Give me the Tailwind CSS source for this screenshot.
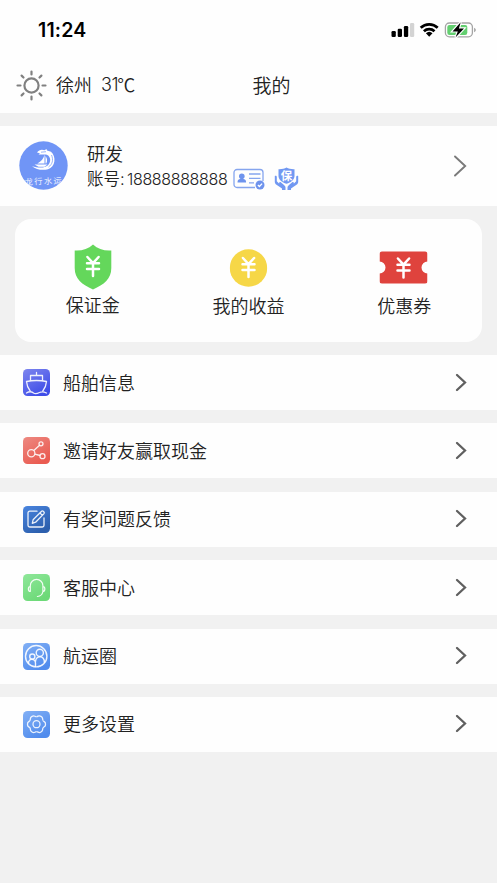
<!DOCTYPE html>
<html lang="zh-CN">
<head>
<meta charset="utf-8">
<title>我的</title>
<script src="https://cdn.jsdelivr.net/npm/@tailwindcss/browser@4"></script>
</head>
<body class="w-[497px] h-[883px] overflow-hidden bg-[#f1f1f1] font-['Inter','Noto_Sans_CJK_SC',sans-serif] font-[350] text-[#222]">
<svg class="absolute w-0 h-0">
  <defs>
    <g id="yen" fill="none" stroke="#fff" stroke-width="2.500" stroke-linecap="round"><path d="M-5.600-9.500 0-3.300 5.600-9.500M-6-3.200H6M-6 2.400H6M0-3V9.600"/></g>
    <path id="lobe" d="M0-7.500C1.800-7.500 2.200-9.400 4.500-7.800 7-6.600 5.600-5.300 6.500-3.750"/>
    <linearGradient id="ship" x1="0" y1="0" x2=".6" y2="1"><stop stop-color="#7e86ee"/><stop offset="1" stop-color="#3f4de8"/></linearGradient>
    <linearGradient id="share" x1="0" y1="0" x2=".6" y2="1"><stop stop-color="#ed8a82"/><stop offset="1" stop-color="#ea5b51"/></linearGradient>
    <linearGradient id="edit" x1="0" y1="0" x2=".6" y2="1"><stop stop-color="#4a85df"/><stop offset="1" stop-color="#2c5fad"/></linearGradient>
    <linearGradient id="service" x1="0" y1="0" x2=".6" y2="1"><stop stop-color="#8fe79a"/><stop offset="1" stop-color="#6cd977"/></linearGradient>
    <linearGradient id="blue" x1="0" y1="0" x2=".6" y2="1"><stop stop-color="#82b0f5"/><stop offset="1" stop-color="#518ced"/></linearGradient>
  </defs>
</svg>

<header class="h-[113px] bg-[#fefefe]">
  <div class="h-[60px] flex items-center justify-between pl-[38px] pr-[20px]">
    <span class="text-[19.500px] leading-[24px] font-semibold text-black tracking-[0.150px]">11:24</span>
    <svg width="86" height="20" viewBox="391 20 86 20">
      <rect x="391.500" y="31" width="4.300" height="6" rx="1.200"/><rect x="397.700" y="28.700" width="4.300" height="8.300" rx="1.200"/><rect x="403.900" y="26" width="4.300" height="11" rx="1.200"/><rect x="410" y="23" width="4.200" height="14" rx="1.200" fill="#d3d3d3"/>
      <g fill="none" stroke="#000" stroke-width="2.700"><path d="M420.700 27.800a12.300 12.300 0 0 1 17 0M423.900 31.200a7.700 7.700 0 0 1 10.600 0"/></g><path d="m425.900 33.300 3.300 3.400 3.300-3.400a4.800 4.800 0 0 0-6.600 0z"/>
      <rect x="445.400" y="23" width="27" height="13.800" rx="4" fill="#fff" stroke="#a4a4a4" stroke-width="1.300"/><rect x="447.300" y="24.900" width="20" height="10" rx="2.200" fill="#63cf70"/><path d="M474.200 27.700v4.500c2-.8 2-3.700 0-4.500z" fill="#999"/>
      <path d="m460.700 22.200-8.200 9.200h5.300l-2.300 6.200 8.500-9.100h-5.100z" stroke="#fff" stroke-width="2.300" paint-order="stroke"/>
    </svg>
  </div>
  <div class="h-[50px] grid grid-cols-[180px_1fr_180px] items-center">
    <div class="flex items-center pl-[16px]">
      <svg width="31" height="31" viewBox="-15.500 -15.500 31 31" fill="none" stroke="#808080" stroke-width="2.200" stroke-linecap="round"><circle r="7.100"/><path d="M0 11v3M-14 0h3M11 0h3M0-14v3M-9.900-9.900l1.900 1.900M9.900-9.900l-1.900 1.900M-9.900 9.900l1.900-1.900M9.900 9.900l-1.900-1.900"/></svg>
      <span class="ml-[9px] pt-[1px] text-[18px] leading-[26px] whitespace-nowrap">徐州</span>
      <span class="ml-[9px] text-[18px] leading-[26px] whitespace-nowrap tracking-[-0.400px]">31</span><span class="-ml-[1px] -mt-[2px] text-[18px] leading-[26px] font-['Noto_Sans_CJK_SC',sans-serif]">℃</span>
    </div>
    <h1 class="text-center pt-[3px] text-[19px] leading-[26px] whitespace-nowrap translate-x-[23px]">我的</h1>
  </div>
</header>

<section class="mt-[13px] h-[79.500px] bg-[#fefefe] flex items-center pl-[19px] pr-[30px]">
  <svg width="49" height="49" viewBox="0 0 49 49">
    <clipPath id="avatar"><circle cx="24.500" cy="24.500" r="24.200"/></clipPath>
    <circle cx="24.500" cy="24.500" r="24.200" fill="#7095f6"/>
    <path d="M18 11.500c2-3 5-3.200 7.500-2.300l2-1.200.5 1.400 4 1.300c5.500 5 4.500 15-3 17.500-5.500 1.500-12 .3-16-3 7 2 14 2 17-2.300 2.500-4 1-8.500-3-9.500l-7.500.2 1.500-1.300z" fill="#fff"/>
    <path d="M25.500 13.500c-.7 4-3.200 7-7.200 9h7.200zM26.500 15c2 2.500 2 5 .8 7.500h-.8zM15.500 23.500h13l-3 2.300h-6z" fill="#fff"/>
    <path d="M32.500 14c2.200 5 .8 9.500-3 12M22 11.200l5-.5" fill="none" stroke="#7095f6" stroke-width=".7"/>
    <g clip-path="url(#avatar)" font-family="Noto Sans CJK SC, sans-serif" font-weight="400" fill="#eef2ff"><text x="24.800" y="43.300" text-anchor="middle" font-size="8.300" letter-spacing="1.300" transform="rotate(-2 24 40)">龙行水运</text></g>
  </svg>
  <div class="ml-[19px] pt-[2px] flex flex-col">
    <span class="text-[18px] leading-[25px]">研发</span>
    <div class="flex items-center h-[25px]">
      <span class="text-[16.500px] leading-[25px] whitespace-nowrap w-[40px]">账号:</span>
      <span class="text-[16px] leading-[25px] font-light whitespace-nowrap tracking-[-0.340px] w-[106px]">18888888888</span>
      <svg width="32" height="22" viewBox="0 0 32 22" fill="none" stroke="#85a5ee" stroke-width="1.300">
        <path d="M22 19.500H4a3 3 0 0 1-3-3V4.500a3 3 0 0 1 3-3h23a3 3 0 0 1 3 3V13" /><path d="M16 6h11.500M16 10.300h11.500M16 14.800h5"/>
        <g fill="#6e93ed" stroke="none"><circle cx="8.800" cy="8.300" r="2.800"/><path d="M4.500 14.500c0-3 1.800-3.700 4.300-3.700s4.300.7 4.300 3.700z"/><circle cx="27" cy="17" r="4.500"/></g><path d="m24.900 17 1.500 1.500 2.700-2.900" stroke="#fff"/>
      </svg>
      <svg class="ml-[9px]" width="25" height="24" viewBox="0 0 25 24">
        <path d="M12.500.5C14.500 1.700 17 2.300 20.500 2.200V9c0 3.800-3.500 6.200-8 7.800C8 15.200 4.500 12.800 4.500 9V2.200C8 2.300 10.500 1.700 12.500.5z" fill="#7198f2"/>
        <path d="M.8 9c1-.6 1.900-.2 2 .8v4.500l2.500 2.400c-.6-1 .3-2.300 1.500-1.500l3.200 2.700c1 .9 1.500 1.700 1.500 2.800V23H8v-1.500l-5.500-3.700C1.400 17 .9 16.200.8 15zM24.200 9c-1-.6-1.900-.2-2 .8v4.500l-2.500 2.400c.6-1-.3-2.300-1.500-1.500L15 17.900c-1 .9-1.500 1.700-1.500 2.800V23H17v-1.500l5.500-3.700c1.100-.8 1.600-1.600 1.700-2.800z" fill="#7198f2"/>
        <text x="12.500" y="13" text-anchor="middle" font-family="Noto Sans CJK SC, sans-serif" font-size="11.500" font-weight="700" fill="#fff">保</text>
      </svg>
    </div>
  </div>
  <svg class="ml-auto" width="14" height="24" viewBox="0 0 14 24" fill="none" stroke="#7a7a7a" stroke-width="1.900" stroke-linecap="round"><path d="m2 2.500 10.200 9.500L2 21.500"/></svg>
</section>

<section class="mt-[13.500px] mx-[15px] h-[123px] rounded-[16px] bg-[#fefefe] grid grid-cols-3 text-[18px] leading-[26px] text-center">
  <div class="flex flex-col items-center pt-[25px]">
    <svg width="38" height="46" viewBox="0 0 38 46"><path d="M19 .5C14 5 8 7 .7 6.500V24c0 11 7.300 16.500 18.300 21.500C30 40.500 37.300 35 37.300 24V6.500C30 7 24 5 19 .5z" fill="#64d75b"/><use href="#yen" x="19" y="22.500"/></svg>
    <span class="mt-[3px]">保证金</span>
  </div>
  <div class="flex flex-col items-center pt-[30px]">
    <svg class="translate-x-[0.500px]" width="38" height="38" viewBox="0 0 38 38"><circle cx="19" cy="19" r="18.700" fill="#f6d747"/><use href="#yen" x="19" y="18.500"/></svg>
    <span class="mt-[7px]">我的收益</span>
  </div>
  <div class="flex flex-col items-center pt-[32px]">
    <svg class="-translate-x-[0.500px]" width="48" height="33" viewBox="0 0 48 33"><path d="M2.500.5h43A2.500 2.500 0 0 1 48 3v7.500a6 6 0 0 0 0 12V30a2.500 2.500 0 0 1-2.500 2.500h-43A2.500 2.500 0 0 1 0 30v-7.500a6 6 0 0 0 0-12V3A2.500 2.500 0 0 1 2.500.5z" fill="#df433d"/><use href="#yen" x="24" y="17"/></svg>
    <span class="mt-[10px]">优惠券</span>
  </div>
</section>

<nav class="mt-[13px] flex flex-col gap-[13.400px] text-[18px] leading-[26px]">
  <a class="h-[55px] bg-[#fefefe] flex items-center pl-[23px] pr-[30px]">
    <svg width="27" height="27" viewBox="0 0 27 27" fill="none" stroke="#fff" stroke-opacity=".9" stroke-width="1.300" stroke-linejoin="round" stroke-linecap="round"><rect width="27" height="27" rx="4.500" fill="url(#ship)" stroke="none"/><path d="M13.500 3.500V6M7.500 11.500V6.500h12v5M3.500 12.500q10-2 20 0c-.3 4-1.700 7-3.700 9.500M3.500 12.500c.3 4 1.700 7 3.700 9.500M3.500 24c3-2 5-1.500 7 0s4 .5 6-.5 4-1 7 .5"/></svg>
    <span class="ml-[13px] pt-[2px]">船舶信息</span>
    <svg class="ml-auto -translate-y-[0.500px]" width="12" height="18" viewBox="0 0 12 18" fill="none" stroke="#606060" stroke-width="2.300" stroke-linecap="round"><path d="m2 1.500 8 7.500-8 7.500"/></svg>
  </a>
  <a class="h-[55px] bg-[#fefefe] flex items-center pl-[23px] pr-[30px]">
    <svg width="27" height="27" viewBox="0 0 27 27" fill="none" stroke="#fff" stroke-opacity=".88" stroke-width="1.300"><rect width="27" height="27" rx="4.500" fill="url(#share)" stroke="none"/><circle cx="8.300" cy="16.200" r="3.600"/><circle cx="18" cy="6.800" r="2"/><circle cx="19.500" cy="19.200" r="2.500"/><path d="m10.800 13.600 5.800-5.400M11.800 17.200l5.300 1.300"/></svg>
    <span class="ml-[13px] pt-[2px]">邀请好友赢取现金</span>
    <svg class="ml-auto -translate-y-[0.500px]" width="12" height="18" viewBox="0 0 12 18" fill="none" stroke="#606060" stroke-width="2.300" stroke-linecap="round"><path d="m2 1.500 8 7.500-8 7.500"/></svg>
  </a>
  <a class="h-[55px] bg-[#fefefe] flex items-center pl-[23px] pr-[30px]">
    <svg width="27" height="27" viewBox="0 0 27 27" fill="none" stroke="#fff" stroke-opacity=".9" stroke-width="1.300" stroke-linecap="round" stroke-linejoin="round"><rect width="27" height="27" rx="4.500" fill="url(#edit)" stroke="none"/><path d="M14 5.200H6.700a1.700 1.700 0 0 0-1.700 1.700v12.400A1.700 1.700 0 0 0 6.700 21h12.600a1.700 1.700 0 0 0 1.700-1.700V12M9.300 17.300l.8-3.500 8.500-8.600c1-1 3.500 1.100 2.400 2.400l-8.400 8.600zM17 7l2.400 2.400"/></svg>
    <span class="ml-[13px] pt-[2px]">有奖问题反馈</span>
    <svg class="ml-auto -translate-y-[0.500px]" width="12" height="18" viewBox="0 0 12 18" fill="none" stroke="#606060" stroke-width="2.300" stroke-linecap="round"><path d="m2 1.500 8 7.500-8 7.500"/></svg>
  </a>
  <a class="h-[55px] bg-[#fefefe] flex items-center pl-[23px] pr-[30px]">
    <svg width="27" height="27" viewBox="0 0 27 27" fill="none" stroke="#fff" stroke-opacity=".9" stroke-width="1.200" stroke-linecap="round" stroke-linejoin="round"><rect width="27" height="27" rx="4.500" fill="url(#service)" stroke="none"/><path d="M7.300 17.500v-5.800a6.200 6.200 0 0 1 12.600 0v5.800M7.300 12.500c-2.600 0-2.600 5 0 5M19.900 12.500c2.600 0 2.600 5 0 5M19.900 17.500c-.5 3-2.500 4.700-5.500 5"/></svg>
    <span class="ml-[13px] pt-[2px]">客服中心</span>
    <svg class="ml-auto -translate-y-[0.500px]" width="12" height="18" viewBox="0 0 12 18" fill="none" stroke="#606060" stroke-width="2.300" stroke-linecap="round"><path d="m2 1.500 8 7.500-8 7.500"/></svg>
  </a>
  <a class="h-[55px] bg-[#fefefe] flex items-center pl-[23px] pr-[30px]">
    <svg width="27" height="27" viewBox="0 0 27 27" fill="none" stroke="#fff" stroke-opacity=".9" stroke-width="1.400" stroke-linecap="round"><rect width="27" height="27" rx="4.500" fill="url(#blue)" stroke="none"/><circle cx="13.200" cy="13.200" r="10.700"/><circle cx="16.800" cy="9.800" r="3.600"/><circle cx="9.300" cy="13.600" r="2.600"/><path d="M5.500 20.500c-.4-5.500 7-5.500 7-.5v3.500M12.500 18.500c.5-6.500 9.300-6.500 8.800.8"/></svg>
    <span class="ml-[13px] pt-[2px]">航运圈</span>
    <svg class="ml-auto -translate-y-[0.500px]" width="12" height="18" viewBox="0 0 12 18" fill="none" stroke="#606060" stroke-width="2.300" stroke-linecap="round"><path d="m2 1.500 8 7.500-8 7.500"/></svg>
  </a>
  <a class="h-[55px] bg-[#fefefe] flex items-center pl-[23px] pr-[30px]">
    <svg width="27" height="27" viewBox="0 0 27 27" fill="none" stroke="#fff" stroke-opacity=".88" stroke-width="1.300"><rect width="27" height="27" rx="4.500" fill="url(#blue)" stroke="none"/><g transform="translate(13.500 13.200)"><circle r="3.500"/><use href="#lobe"/><use href="#lobe" transform="rotate(60)"/><use href="#lobe" transform="rotate(120)"/><use href="#lobe" transform="rotate(180)"/><use href="#lobe" transform="rotate(240)"/><use href="#lobe" transform="rotate(300)"/></g></svg>
    <span class="ml-[13px] pt-[2px]">更多设置</span>
    <svg class="ml-auto -translate-y-[0.500px]" width="12" height="18" viewBox="0 0 12 18" fill="none" stroke="#606060" stroke-width="2.300" stroke-linecap="round"><path d="m2 1.500 8 7.500-8 7.500"/></svg>
  </a>
</nav>
</body>
</html>
